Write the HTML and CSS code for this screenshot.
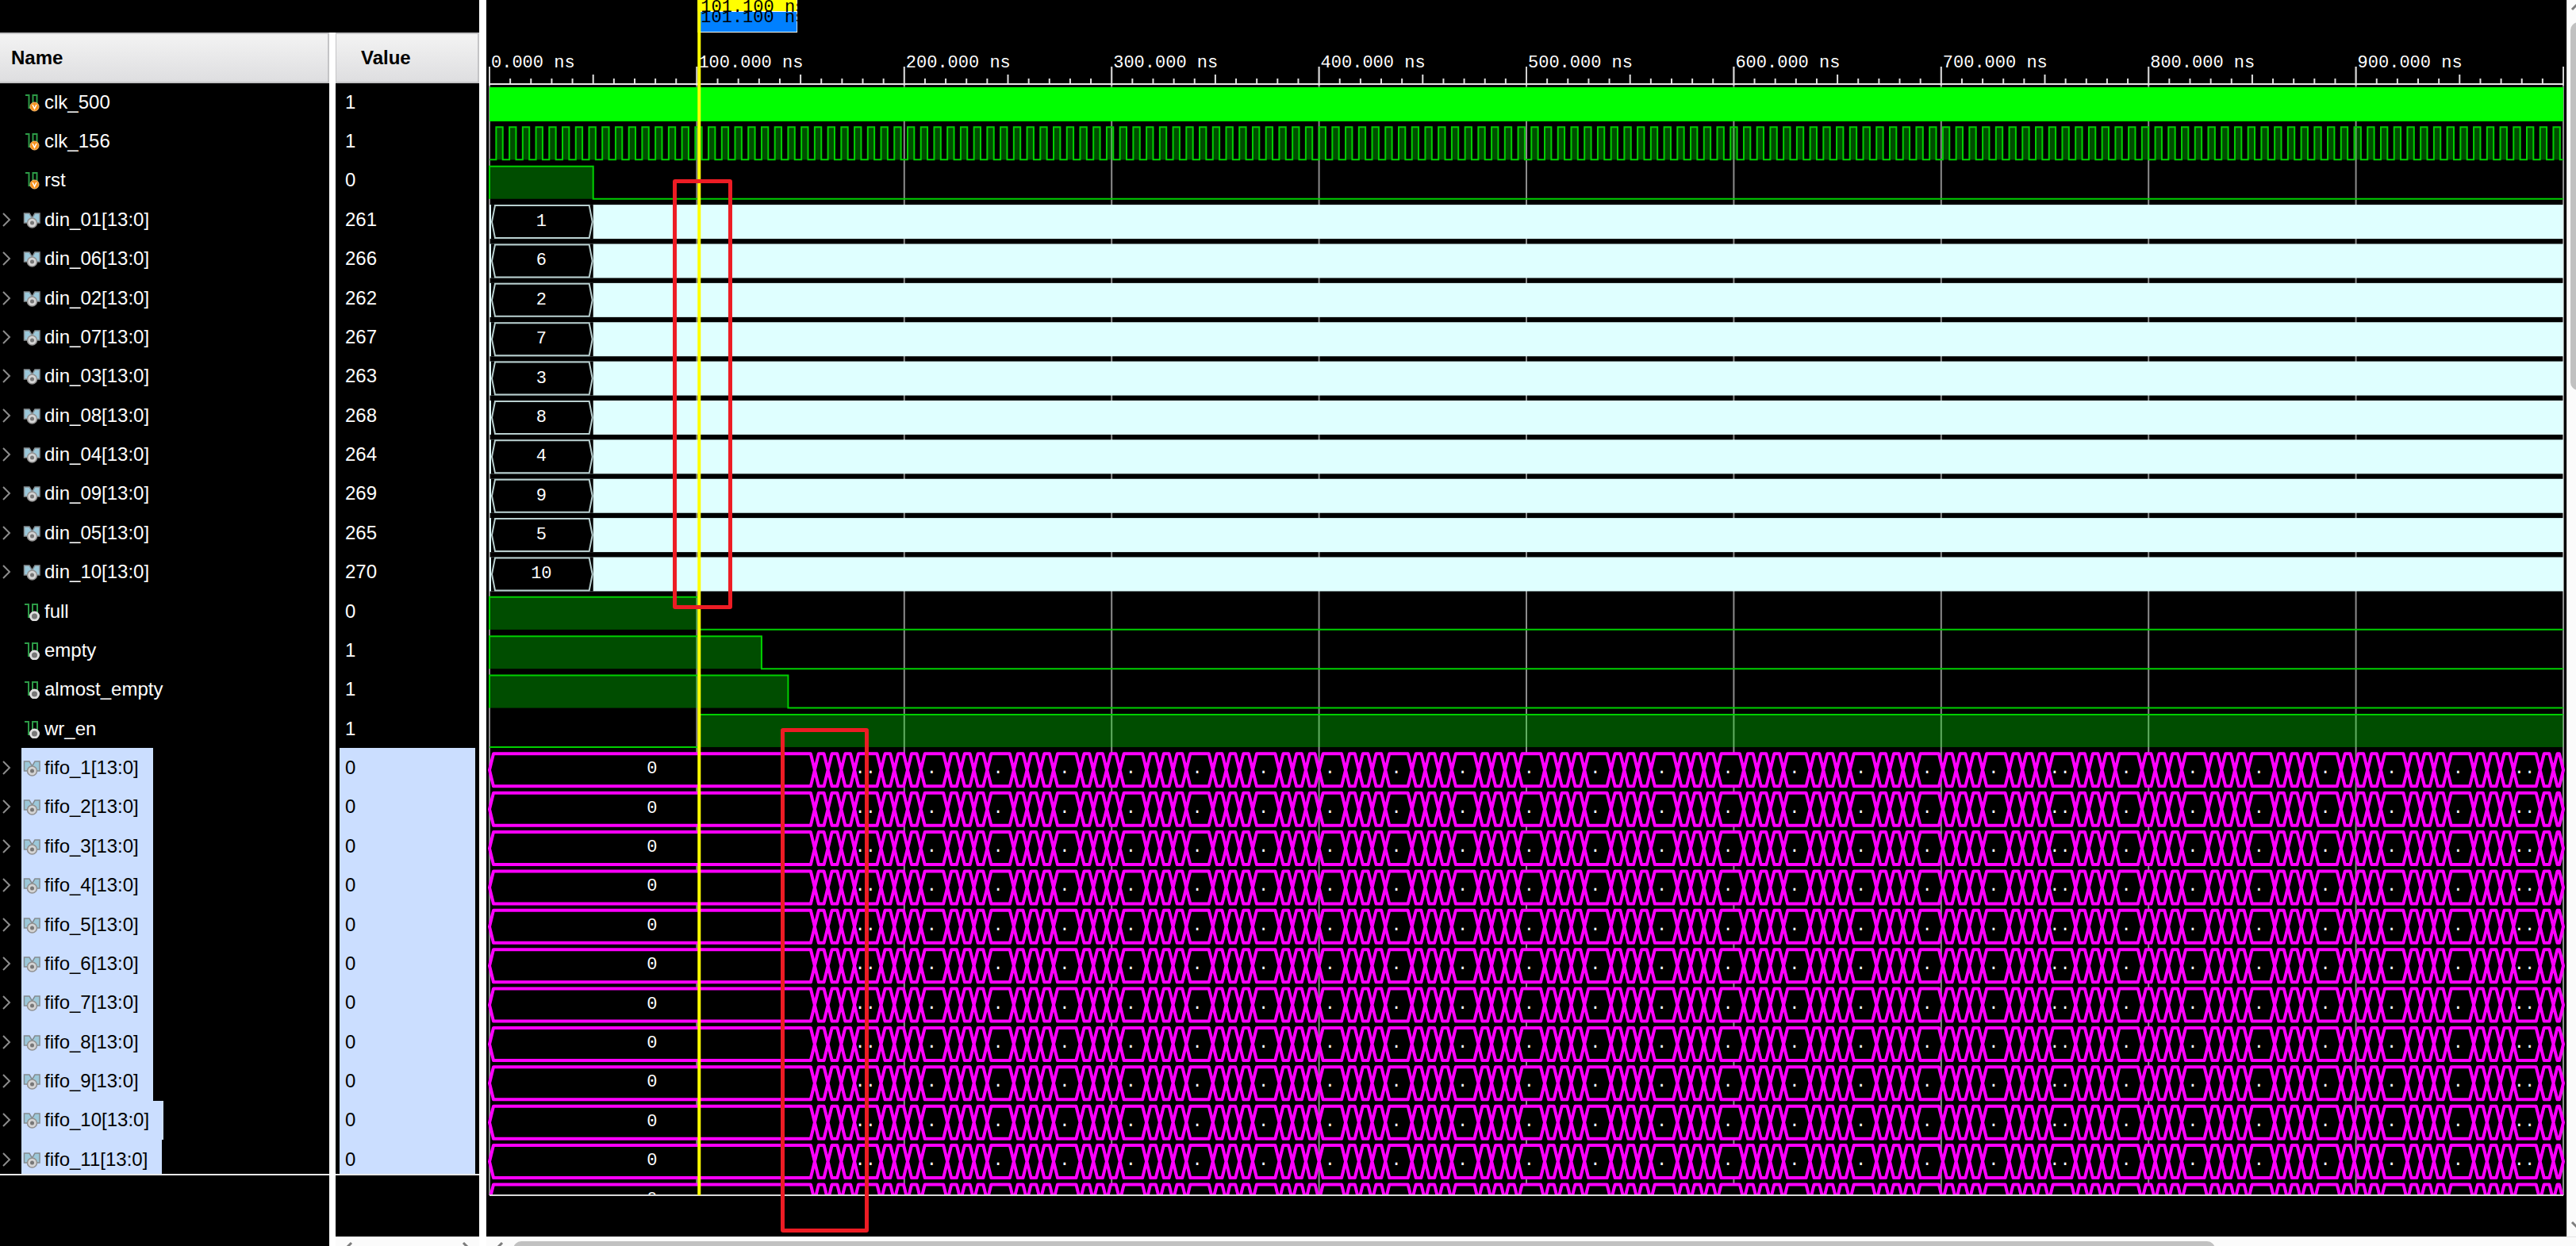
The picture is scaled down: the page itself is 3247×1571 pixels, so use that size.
FILE: index.html
```html
<!DOCTYPE html>
<html lang="en">
<head>
<meta charset="utf-8">
<title>Waveform</title>
<link rel="stylesheet" href="styles.css">
</head>
<body>
<svg class="symbols" aria-hidden="true">
  <symbol id="icon-input" viewBox="0 0 22 24">
    <path d="M3 3h4.500v16h5V3h5v12" fill="none" stroke="#2c9a46" stroke-width="2"/>
    <circle cx="14.500" cy="17.500" r="5.500" fill="#f7931e" stroke="#fbc078" stroke-width="1"/>
    <path d="M12 15l2.500 5 2.500-5" fill="none" stroke="#fff" stroke-width="1.500"/>
  </symbol>
  <symbol id="icon-wire" viewBox="0 0 22 24">
    <path d="M2 3h5v16h5V3h6v12" fill="none" stroke="#2c9a46" stroke-width="2"/>
    <circle cx="14.500" cy="18" r="5" fill="#777" stroke="#ddd" stroke-width="3"/>
  </symbol>
  <symbol id="icon-bus" viewBox="0 0 22 24">
    <path d="M1.500 4h6.500l3.500 6 3.500-6h6v12h-5l-4.500-4-4.500 4h-5.500z" fill="#9cc8da" stroke="#858c90" stroke-width="1.500"/>
    <circle cx="11.500" cy="16" r="6" fill="#d4d4d4" stroke="#909090" stroke-width="1.500"/>
    <circle cx="11.500" cy="16" r="2.500" fill="#777"/>
  </symbol>
  <symbol id="icon-chevron" viewBox="0 0 14 18">
    <path d="M4 1l8 8-8 8" fill="none" stroke="#8c8c8c" stroke-width="2"/>
  </symbol>
  <symbol id="icon-up" viewBox="0 0 20 12">
    <path d="M2 10l8-8 8 8" fill="none" stroke="#7d7d7d" stroke-width="3"/>
  </symbol>
  <symbol id="icon-left" viewBox="0 0 12 20">
    <path d="M10 2l-8 8 8 8" fill="none" stroke="#7d7d7d" stroke-width="3"/>
  </symbol>
</svg>

<main class="viewer">
  <section class="signals">
    <div class="panels">
      <section class="panel panel-name">
        <h2 class="panel-head">Name</h2>
        <div class="panel-body"><ul class="rows" id="names"></ul></div>
        <div class="panel-foot"></div>
      </section>
      <section class="panel panel-value">
        <h2 class="panel-head">Value</h2>
        <div class="panel-body"><ul class="rows" id="values"></ul></div>
        <div class="panel-foot">
          <div class="hbar">
            <button class="arrow" aria-label="Scroll values left"><svg><use href="#icon-left"/></svg></button>
            <button class="arrow arrow-right" aria-label="Scroll values right"><svg><use href="#icon-left"/></svg></button>
          </div>
        </div>
      </section>
    </div>
  </section>

  <section class="wave">
    <div class="wave-main">
      <div class="wave-canvas"><svg id="plot" class="plot" role="img" aria-label="Signal waveforms"></svg></div>
      <div class="vbar">
        <button class="arrow-v" aria-label="Scroll up"><svg><use href="#icon-up"/></svg></button>
        <div class="vtrack"><div class="vthumb"></div></div>
        <button class="arrow-v arrow-down" aria-label="Scroll down"><svg><use href="#icon-up"/></svg></button>
      </div>
    </div>
    <div class="hbar hbar-wave">
      <button class="arrow" aria-label="Scroll left"><svg><use href="#icon-left"/></svg></button>
      <div class="htrack"><div class="hthumb"></div></div>
      <button class="arrow arrow-right arrow-end" aria-label="Scroll right"><svg><use href="#icon-left"/></svg></button>
    </div>
    <div class="mark mark-inputs"></div>
    <div class="mark mark-outputs"></div>
  </section>
</main>
<script src="wave.js"></script>
</body>
</html>
```
FILE: styles.css
```css
* { box-sizing: border-box; }

body {
  margin: 0;
  background: #000;
  color: #fff;
  font-family: "Liberation Sans", Arial, sans-serif;
  font-size: 24px;
}

button { padding: 0; border: 0; background: none; display: flex; }
.symbols { position: absolute; width: 0; height: 0; }

.viewer {
  display: flex;
  gap: 9px;
  height: 100vh;
  overflow: hidden;
  background: #fff;
}

/* signal list */
.signals {
  flex: none;
  display: flex;
  flex-direction: column;
  padding-top: 41px;
  background: #000;
}
.panels { flex: 1; display: flex; gap: 8px; background: #fff; min-height: 0; }
.panel { display: flex; flex-direction: column; background: #000; min-height: 0; }
.panel-name { width: 415px; }
.panel-value { width: 181px; }

.panel-head {
  flex: none;
  height: 64px;
  margin: 0 0 -1px;
  padding: 0 14px;
  border: 2px solid #c4c4c6;
  border-left-width: 0;
  background: linear-gradient(#f3f3f3, #dedee0);
  color: #000;
  font-size: 24px;
  line-height: 60px;
  z-index: 1;
}
.panel-value .panel-head { padding-left: 31px; border-left-width: 1px; }

.panel-body { flex: 1; min-height: 0; overflow: hidden; }
.rows {
  display: grid;
  grid-auto-rows: 1fr;
  height: 88vh;
  margin: 0;
  padding: 0;
  list-style: none;
}
.row { display: flex; align-items: stretch; }
.expander { width: 27px; flex: none; display: flex; align-items: center; }
.expander svg { width: 14px; height: 18px; }
.label { display: flex; align-items: center; gap: 5px; padding: 0 18px 0 2px; }
.label svg { width: 22px; height: 24px; }
.value { display: flex; align-items: center; margin: 0 5px; padding: 0 7px; }
.selected .label, .value.selected { background: #cbdeff; color: #000; }

.panel-foot {
  flex: none;
  height: 91px;
  border-top: 2px solid #e8e8e8;
  background: #000;
  display: flex;
  flex-direction: column;
  justify-content: flex-end;
}

/* scroll bars */
.hbar {
  flex: none;
  height: 12px;
  padding: 5px 10px 0;
  display: flex;
  justify-content: space-between;
  background: #fbfbfb;
  border-top: 1px solid #e4e4e4;
  overflow: hidden;
}
.arrow svg { width: 12px; height: 20px; }
.arrow-right svg { transform: scaleX(-1); }
.hbar-wave { padding-right: 0; gap: 12px; }
.htrack { flex: 1; }
.hthumb { width: 83%; height: 20px; border-radius: 10px; background: #c1c1c1; }
.arrow-end { width: 4px; overflow: hidden; }

.vbar {
  flex: none;
  width: 12px;
  padding: 2px 0 8px 4px;
  display: flex;
  flex-direction: column;
  gap: 14px;
  background: #fbfbfb;
  border-left: 1px solid #d8d8d8;
  overflow: hidden;
}
.arrow-v svg { width: 20px; height: 12px; flex: none; }
.arrow-down svg { transform: scaleY(-1); }
.vtrack { flex: 1; }
.vthumb { width: 20px; height: 31%; border-radius: 10px; background: #c1c1c1; }

/* waveform */
.wave {
  flex: 1;
  min-width: 0;
  position: relative;
  display: flex;
  flex-direction: column;
}
.wave-main { flex: 1; min-height: 0; display: flex; }
.wave-canvas { flex: 1; min-width: 0; padding-bottom: 51px; background: #000; }
.plot { display: block; width: 100%; height: 100%; }
.plot text {
  fill: #fff;
  font-family: "Liberation Mono", "Courier New", monospace;
  font-size: 22px;
}
.plot .center { text-anchor: middle; }
.plot .flag { fill: #000; }

/* annotation frames over the plot */
.mark { position: absolute; border: 5px solid #ed1c24; border-radius: 3px; }
.mark-inputs { left: 235px; top: 226px; width: 75px; height: 542px; }
.mark-outputs { left: 371px; top: 918px; width: 111px; height: 636px; }
```
FILE: wave.js
```js
const END = 1000;
const CURSOR = 101.1;

const signals = [
  { name: 'clk_500', value: '1', icon: 'input', kind: 'solid' },
  { name: 'clk_156', value: '1', icon: 'input', kind: 'clock', period: 6.4 },
  { name: 'rst', value: '0', icon: 'input', kind: 'level', high: [0, 50] }
];
[[1, 261], [6, 266], [2, 262], [7, 267], [3, 263], [8, 268], [4, 264], [9, 269], [5, 265], [10, 270]]
  .forEach(([n, value]) => signals.push({
    name: `din_${String(n).padStart(2, '0')}[13:0]`, value: String(value), icon: 'bus', kind: 'dense', first: String(n)
  }));
signals.push(
  { name: 'full', value: '0', icon: 'wire', kind: 'level', high: [0, CURSOR] },
  { name: 'empty', value: '1', icon: 'wire', kind: 'level', high: [0, 131.2] },
  { name: 'almost_empty', value: '1', icon: 'wire', kind: 'level', high: [0, 144] },
  { name: 'wr_en', value: '1', icon: 'wire', kind: 'level', high: [CURSOR, END] }
);
for (let n = 1; n <= 11; n++) {
  signals.push({ name: `fifo_${n}[13:0]`, value: '0', icon: 'bus', kind: 'fifo', selected: true });
}

const icon = id => `<svg aria-hidden="true"><use href="#icon-${id}"/></svg>`;

document.getElementById('names').innerHTML = signals.map(s => `
  <li class="row${s.selected ? ' selected' : ''}">
    ${s.icon === 'bus'
      ? `<button class="expander" aria-label="Expand ${s.name}">${icon('chevron')}</button>`
      : '<span class="expander"></span>'}
    <span class="label">${icon(s.icon)}<span>${s.name}</span></span>
  </li>`).join('');
document.getElementById('values').innerHTML = signals.map(s =>
  `<li class="value${s.selected ? ' selected' : ''}">${s.value}</li>`).join('');

const plot = document.getElementById('plot');

function draw() {
  const box = plot.getBoundingClientRect();
  const rows = document.getElementById('names').getBoundingClientRect();
  const pitch = rows.height / signals.length;
  const left = 4;
  const scale = (box.width - 8) / END;
  const X = t => left + t * scale;
  const bottom = box.height - 1;
  const out = [];
  const line = (x1, y1, x2, y2, color, w) =>
    out.push(`<path d="M${x1} ${y1}L${x2} ${y2}" stroke="${color}" stroke-width="${w}"/>`);

  // time grid
  for (let t = 0; t <= END; t += 100) {
    line(X(t), 84, X(t), bottom, '#8c8c8c', 2);
    line(X(t), 84, X(t), 108, '#d0d0d0', 2);
  }
  for (let t = 10; t < END; t += 10) {
    if (t % 100) line(X(t), t % 50 ? 99 : 94, X(t), 106, '#e0e0e0', 2);
  }
  line(X(0), 106, X(END), 106, '#e8e8e8', 2);

  const level = (spans, y) => {
    const hi = y + 7, lo = y + 48;
    let d = `M${X(0)} ${lo}`;
    spans.forEach(([a, b]) => {
      out.push(`<rect x="${X(a)}" y="${hi}" width="${X(b) - X(a)}" height="${lo - hi}" fill="#00ff00" fill-opacity="0.3"/>`);
      d += `H${X(a)}V${hi}H${X(b)}`;
      if (b < END) d += `V${lo}`;
    });
    if (spans[spans.length - 1][1] < END) d += `H${X(END)}`;
    out.push(`<path d="${d}" fill="none" stroke="#00d000" stroke-width="2"/>`);
  };

  const draws = {
    solid(s, y) {
      out.push(`<rect x="${X(0)}" y="${y + 6}" width="${X(END) - X(0)}" height="43" fill="#00ff00"/>`);
    },
    clock(s, y) {
      const spans = [];
      for (let t = s.period / 2; t + s.period / 2 <= END; t += s.period) spans.push([t, t + s.period / 2]);
      level(spans, y);
    },
    level(s, y) { level([s.high], y); },
    dense(s, y) {
      const top = y + 6, low = y + 49, mid = (top + low) / 2;
      const a = X(0) + 3, b = X(50) - 1;
      out.push(`<rect x="${X(0)}" y="${top}" width="${X(END) - X(0)}" height="43" fill="#dfffff"/>`);
      out.push(`<rect x="${X(0) + 2}" y="${top}" width="${X(50) - X(0) - 2}" height="43" fill="#000"/>`);
      out.push(`<path d="M${a} ${mid}L${a + 4} ${top + 1}H${b - 4}L${b} ${mid}L${b - 4} ${low - 1}H${a + 4}Z" fill="none" stroke="#b8cfcf" stroke-width="2"/>`);
      out.push(`<text class="center" x="${X(25)}" y="${y + 33}">${s.first}</text>`);
    },
    fifo(s, y) {
      const top = y + 7, low = y + 48, mid = (top + low) / 2;
      const cells = [[0, 156.8, '0']];
      for (let t = 156.8, n = 0; t < END; n++) {
        const wide = n % 4 === 3;
        const k = (n - 3) / 4;
        const next = Math.min(t + (wide ? 12.8 : 6.4), END);
        cells.push([t, next, wide ? ([0, 18, 25].includes(k) ? '..' : '.') : '']);
        t = next;
      }
      const labels = [];
      let d = '';
      cells.forEach(([a, b, text]) => {
        const l = X(a), r = X(b);
        d += `M${l} ${mid}L${l + 5} ${top}H${r - 5}L${r} ${mid}L${r - 5} ${low}H${l + 5}Z`;
        // below the plot's edge only the value of the long first cell shows
        if (text === '0' || (text && y + 32 < bottom)) {
          labels.push(`<text class="center" x="${(l + r) / 2 - (text === '0' ? 0 : 3)}" y="${y + 32}">${text}</text>`);
        }
      });
      out.push(`<path d="${d}" fill="#000" stroke="#ff00ff" stroke-width="4" stroke-linejoin="round"/>`);
      out.push(...labels);
    }
  };

  // one more bus continues below the last listed signal
  [...signals, { kind: 'fifo' }].forEach((s, i) => draws[s.kind](s, rows.top + i * pitch));
  out.push(`<rect x="0" y="${bottom}" width="${box.width}" height="20" fill="#000"/>`);
  line(X(0), bottom, X(END), bottom, '#d8d8d8', 2);

  // time labels
  for (let t = 0; t < END; t += 100) {
    out.push(`<text x="${X(t) + 2}" y="85">${t}.000 ns</text>`);
  }

  // cursor and its flags
  const c = X(CURSOR);
  out.push(`<svg x="${c - 2}" y="0" width="126" height="41">
    <rect width="126" height="41" fill="#fff"/>
    <rect x="2" y="15" width="123" height="25" fill="#0080ff"/>
    <rect width="125" height="14" fill="#ffff00"/>
    <text class="flag" x="4" y="15">101.100 ns</text>
    <text class="flag" x="4" y="28">101.100 ns</text>
  </svg>`);
  line(c, 0, c, bottom, '#ffff00', 4);

  plot.innerHTML = out.join('');
}

draw();
window.addEventListener('resize', draw);
```
